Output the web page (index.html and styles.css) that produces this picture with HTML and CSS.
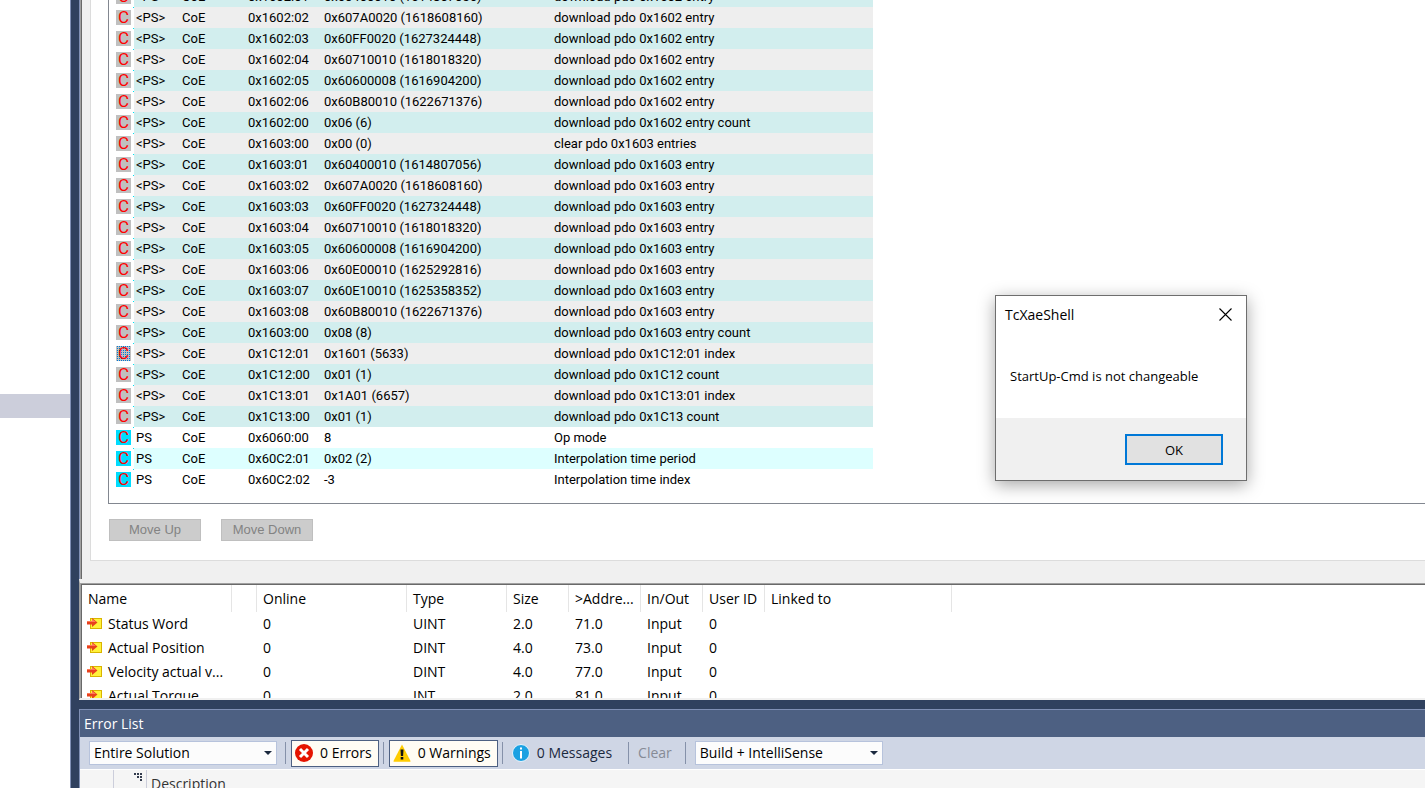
FILE: index.html
```html
<!DOCTYPE html>
<html lang="en">
<head>
<meta charset="utf-8">
<title>TcXaeShell</title>
<link rel="stylesheet" href="styles.css">
</head>
<body>
<svg class="defs" aria-hidden="true">
  <symbol id="input-var" viewBox="0 0 15 12">
    <rect x="3.500" y=".5" width="11" height="10" fill="#fff23a" stroke="#d9b400"/>
    <path d="M0 3h5V0l5.500 4.500L5 9V6.500H0z" fill="#e8401c"/>
    <path d="M0 3h5V1l4 3H0z" fill="#ff7a58"/>
  </symbol>
</svg>
<div class="shell">
  <aside class="tree"><div class="tree-selection"></div></aside>
  <main class="workspace">
    <section class="editor">
      <div class="page">
        <div class="list">
          <table class="startup">
            <colgroup><col class="c-icon"><col class="c-trans"><col class="c-proto"><col class="c-index"><col class="c-data"><col class="c-comment"></colgroup>
            <tbody>
            <tr class="teal"><td><span class="cmd">C</span></td><td>&lt;PS&gt;</td><td>CoE</td><td>0x1602:01</td><td>0x60400010 (1614807056)</td><td>download pdo 0x1602 entry</td></tr>
            <tr class="gray"><td><span class="cmd">C</span></td><td>&lt;PS&gt;</td><td>CoE</td><td>0x1602:02</td><td>0x607A0020 (1618608160)</td><td>download pdo 0x1602 entry</td></tr>
            <tr class="teal"><td><span class="cmd">C</span></td><td>&lt;PS&gt;</td><td>CoE</td><td>0x1602:03</td><td>0x60FF0020 (1627324448)</td><td>download pdo 0x1602 entry</td></tr>
            <tr class="gray"><td><span class="cmd">C</span></td><td>&lt;PS&gt;</td><td>CoE</td><td>0x1602:04</td><td>0x60710010 (1618018320)</td><td>download pdo 0x1602 entry</td></tr>
            <tr class="teal"><td><span class="cmd">C</span></td><td>&lt;PS&gt;</td><td>CoE</td><td>0x1602:05</td><td>0x60600008 (1616904200)</td><td>download pdo 0x1602 entry</td></tr>
            <tr class="gray"><td><span class="cmd">C</span></td><td>&lt;PS&gt;</td><td>CoE</td><td>0x1602:06</td><td>0x60B80010 (1622671376)</td><td>download pdo 0x1602 entry</td></tr>
            <tr class="teal"><td><span class="cmd">C</span></td><td>&lt;PS&gt;</td><td>CoE</td><td>0x1602:00</td><td>0x06 (6)</td><td>download pdo 0x1602 entry count</td></tr>
            <tr class="gray"><td><span class="cmd">C</span></td><td>&lt;PS&gt;</td><td>CoE</td><td>0x1603:00</td><td>0x00 (0)</td><td>clear pdo 0x1603 entries</td></tr>
            <tr class="teal"><td><span class="cmd">C</span></td><td>&lt;PS&gt;</td><td>CoE</td><td>0x1603:01</td><td>0x60400010 (1614807056)</td><td>download pdo 0x1603 entry</td></tr>
            <tr class="gray"><td><span class="cmd">C</span></td><td>&lt;PS&gt;</td><td>CoE</td><td>0x1603:02</td><td>0x607A0020 (1618608160)</td><td>download pdo 0x1603 entry</td></tr>
            <tr class="teal"><td><span class="cmd">C</span></td><td>&lt;PS&gt;</td><td>CoE</td><td>0x1603:03</td><td>0x60FF0020 (1627324448)</td><td>download pdo 0x1603 entry</td></tr>
            <tr class="gray"><td><span class="cmd">C</span></td><td>&lt;PS&gt;</td><td>CoE</td><td>0x1603:04</td><td>0x60710010 (1618018320)</td><td>download pdo 0x1603 entry</td></tr>
            <tr class="teal"><td><span class="cmd">C</span></td><td>&lt;PS&gt;</td><td>CoE</td><td>0x1603:05</td><td>0x60600008 (1616904200)</td><td>download pdo 0x1603 entry</td></tr>
            <tr class="gray"><td><span class="cmd">C</span></td><td>&lt;PS&gt;</td><td>CoE</td><td>0x1603:06</td><td>0x60E00010 (1625292816)</td><td>download pdo 0x1603 entry</td></tr>
            <tr class="teal"><td><span class="cmd">C</span></td><td>&lt;PS&gt;</td><td>CoE</td><td>0x1603:07</td><td>0x60E10010 (1625358352)</td><td>download pdo 0x1603 entry</td></tr>
            <tr class="gray"><td><span class="cmd">C</span></td><td>&lt;PS&gt;</td><td>CoE</td><td>0x1603:08</td><td>0x60B80010 (1622671376)</td><td>download pdo 0x1603 entry</td></tr>
            <tr class="teal"><td><span class="cmd">C</span></td><td>&lt;PS&gt;</td><td>CoE</td><td>0x1603:00</td><td>0x08 (8)</td><td>download pdo 0x1603 entry count</td></tr>
            <tr class="gray"><td><span class="cmd selected">C</span></td><td>&lt;PS&gt;</td><td>CoE</td><td>0x1C12:01</td><td>0x1601 (5633)</td><td>download pdo 0x1C12:01 index</td></tr>
            <tr class="teal"><td><span class="cmd">C</span></td><td>&lt;PS&gt;</td><td>CoE</td><td>0x1C12:00</td><td>0x01 (1)</td><td>download pdo 0x1C12 count</td></tr>
            <tr class="gray"><td><span class="cmd">C</span></td><td>&lt;PS&gt;</td><td>CoE</td><td>0x1C13:01</td><td>0x1A01 (6657)</td><td>download pdo 0x1C13:01 index</td></tr>
            <tr class="teal"><td><span class="cmd">C</span></td><td>&lt;PS&gt;</td><td>CoE</td><td>0x1C13:00</td><td>0x01 (1)</td><td>download pdo 0x1C13 count</td></tr>
            <tr><td><span class="cmd editable">C</span></td><td>PS</td><td>CoE</td><td>0x6060:00</td><td>8</td><td>Op mode</td></tr>
            <tr class="aqua"><td><span class="cmd editable">C</span></td><td>PS</td><td>CoE</td><td>0x60C2:01</td><td>0x02 (2)</td><td>Interpolation time period</td></tr>
            <tr><td><span class="cmd editable">C</span></td><td>PS</td><td>CoE</td><td>0x60C2:02</td><td>-3</td><td>Interpolation time index</td></tr>
            </tbody>
          </table>
        </div>
        <div class="moves">
          <button class="move" type="button" disabled>Move Up</button>
          <button class="move" type="button" disabled>Move Down</button>
        </div>
      </div>
    </section>
    <section class="variables">
      <table class="vars">
        <colgroup><col class="v-name"><col class="v-gap"><col class="v-online"><col class="v-type"><col class="v-size"><col class="v-addr"><col class="v-io"><col class="v-user"><col class="v-link"></colgroup>
        <thead><tr><th>Name</th><th></th><th>Online</th><th>Type</th><th>Size</th><th>&gt;Addre...</th><th>In/Out</th><th>User ID</th><th>Linked to</th></tr></thead>
        <tbody>
        <tr><td><span class="var"><svg class="var-icon"><use href="#input-var"/></svg>Status Word</span></td><td></td><td>0</td><td>UINT</td><td>2.0</td><td>71.0</td><td>Input</td><td>0</td><td></td></tr>
        <tr><td><span class="var"><svg class="var-icon"><use href="#input-var"/></svg>Actual Position</span></td><td></td><td>0</td><td>DINT</td><td>4.0</td><td>73.0</td><td>Input</td><td>0</td><td></td></tr>
        <tr><td><span class="var"><svg class="var-icon"><use href="#input-var"/></svg>Velocity actual v...</span></td><td></td><td>0</td><td>DINT</td><td>4.0</td><td>77.0</td><td>Input</td><td>0</td><td></td></tr>
        <tr><td><span class="var"><svg class="var-icon"><use href="#input-var"/></svg>Actual Torque</span></td><td></td><td>0</td><td>INT</td><td>2.0</td><td>81.0</td><td>Input</td><td>0</td><td></td></tr>
        </tbody>
      </table>
    </section>
    <section class="errors">
      <h2 class="title">Error List</h2>
      <div class="toolbar">
        <span class="combo"><select aria-label="Scope"><option>Entire Solution</option></select></span>
        <span class="sep"></span>
        <button class="filter on" type="button">
          <svg class="status" viewBox="0 0 18 18"><circle cx="9" cy="9" r="9" fill="#e51400"/><path d="M5 5l8 8M13 5l-8 8" stroke="#fff" stroke-width="3"/></svg>0 Errors</button>
        <span class="sep"></span>
        <button class="filter on" type="button">
          <svg class="status" viewBox="0 0 18 18"><path d="M9 0.500L17.500 17a.6.600 0 0 1-.5.800H1a.6.600 0 0 1-.5-.8z" fill="#fc0"/><path d="M7.500 5.500h3l-.4 6.500h-2.200zM7.700 13h2.600v2.600H7.700z" fill="#111"/></svg>0 Warnings</button>
        <span class="sep"></span>
        <button class="filter" type="button">
          <svg class="status" viewBox="0 0 18 18"><circle cx="9" cy="9" r="8.500" fill="#1ba1e2" stroke="#e8f3fb"/><path d="M8 3.500h2v2H8zM8 7h2v7.500H8z" fill="#fff"/></svg>0 Messages</button>
        <span class="sep"></span>
        <button class="clear" type="button" disabled>Clear</button>
        <span class="sep wide"></span>
        <span class="combo"><select aria-label="Source"><option>Build + IntelliSense</option></select></span>
      </div>
      <div class="columns">
        <span class="col-blank"></span>
        <span class="col-icon"><svg width="8" height="8" viewBox="0 0 8 8"><path d="M0 0h2v2H0zM3 0h2v2H3zM6 0h2v2H6zM3 3h2v2H3zM6 3h2v2H6zM6 6h2v2H6z" fill="#333b4d"/></svg></span>
        <span class="col-desc">Description</span>
      </div>
    </section>
  </main>
</div>
<div class="dialog" role="dialog" aria-labelledby="dlg-title">
  <header class="dialog-head">
    <span id="dlg-title">TcXaeShell</span>
    <button class="close" type="button" aria-label="Close"><svg width="13" height="13" viewBox="0 0 13 13"><path d="M.5.500l12 12M12.500.500l-12 12" stroke="#000" stroke-width="1.100"/></svg></button>
  </header>
  <p class="message">StartUp-Cmd is not changeable</p>
  <footer class="dialog-foot"><button class="ok" type="button">OK</button></footer>
</div>
</body>
</html>
```
FILE: styles.css
```css
* { box-sizing: border-box; }
body {
  margin: 0;
  height: 100vh;
  overflow: hidden;
  font: 14px/20px "Open Sans", "Noto Sans", sans-serif;
  color: #000;
  background: #fff;
}
button, select { font: inherit; color: inherit; margin: 0; }
.defs { display: none; }
.shell { display: flex; height: 100%; }
.tree { flex: 0 0 70px; padding-top: 394px; }
.tree-selection { height: 24px; background: #cccedb; }
.workspace {
  flex: 1;
  min-width: 0;
  display: flex;
  flex-direction: column;
  padding-left: 8px;
  background: #30415f;
  border-left: 1px solid #8090b5;
}

.editor {
  flex: 1;
  min-height: 0;
  display: flex;
  flex-direction: column;
  justify-content: flex-end;
  overflow: hidden;
  padding: 0 0 18px 10px;
  background: #f0f0f0;
  border-left: 1px solid #8090b5;
  box-shadow: inset 1px 0 #a0a0a0, inset 2px 0 #696969;
}
.page {
  padding: 0 0 19px 17px;
  background: #fff;
  border: solid #dcdcdc;
  border-width: 0 0 1px 1px;
}
.list { padding-bottom: 13px; border: solid #828790; border-width: 0 0 1px 1px; }
.startup {
  table-layout: fixed;
  width: 764px;
  border-collapse: collapse;
  font: 13px/21px Roboto, "Liberation Sans", sans-serif;
}
.startup td { height: 21px; padding: 0 0 0 2px; white-space: nowrap; }
.startup td:first-child {
  padding-left: 7px;
  background: linear-gradient(#00e0f0, #00e0f0) 24px 0 / 1px 1px no-repeat #fff;
}
.c-icon { width: 25px; }
.c-trans { width: 46px; }
.c-proto { width: 66px; }
.c-index { width: 76px; }
.c-data { width: 230px; }
.teal { background: #d2eeee; }
.gray { background: #eee; }
.aqua { background: #dff; }
.cmd {
  display: block;
  width: 15px;
  height: 15px;
  padding-left: 2px;
  background: #c0c0c0;
  color: #f00;
  font: 17px/15px Roboto, "Liberation Sans", sans-serif;
}
.cmd.editable { background: #00dcff; }
.cmd.selected { background: conic-gradient(#0078d7 25%, #c0c0c0 0) 0 0 / 2px 2px; }
.moves { display: flex; gap: 20px; margin: 15px 0 0 1px; }
.move {
  width: 92px;
  height: 22px;
  padding: 0;
  border: 1px solid #bfbfbf;
  background: #ccc;
  color: #838383;
  font: 13px/20px "Liberation Sans", Arial, sans-serif;
}

.variables {
  flex: 0 0 121px;
  overflow: hidden;
  background: #fff;
  border-left: 1px solid #a0a0a0;
  border-top: 4px solid #f0f0f0;
  border-bottom: 2px solid #f0f0f0;
  box-shadow: inset 1px 1px #a0a0a0, inset 2px 2px #696969;
}
.vars {
  table-layout: fixed;
  width: 870px;
  margin: 2px 0 0 2px;
  border-collapse: separate;
  border-spacing: 0;
}
.vars th, .vars td { padding: 0 0 0 6px; text-align: left; font-weight: 400; white-space: nowrap; }
.vars th { height: 27px; border-right: 1px solid #e5e5e5; }
.vars td { height: 24px; }
.vars td:first-child { padding-left: 5px; }
.v-name { width: 150px; }
.v-gap { width: 25px; }
.v-online { width: 150px; }
.v-type { width: 100px; }
.v-size, .v-io, .v-user { width: 62px; }
.v-addr { width: 72px; }
.var { display: flex; align-items: center; gap: 6px; }
.var-icon { width: 15px; height: 12px; }

.errors { border-left: 1px solid #8090b5; border-top: 1px solid #8090b5; margin-top: 9px; background: #cfd6e5; }
.title { margin: 0; padding: 0 4px; background: #4d6082; color: #fff; font-size: 14px; font-weight: 400; line-height: 27px; }
.toolbar { display: flex; align-items: center; height: 32px; padding: 0 9px; }
.combo { position: relative; width: 188px; height: 24px; }
.combo::after {
  content: "";
  position: absolute;
  right: 5px;
  top: 10px;
  border: solid transparent;
  border-width: 4px 4px 0;
  border-top-color: #1b293e;
  pointer-events: none;
}
.combo select {
  appearance: none;
  width: 100%;
  height: 100%;
  padding: 0 4px;
  border: 1px solid #b7c3dc;
  border-radius: 0;
  background: #fcfcfc;
}
.sep { width: 1px; height: 22px; margin: 0 5px 0 8px; background: #8591a9; }
.sep.wide { margin: 0 9px; }
.filter {
  display: flex;
  align-items: center;
  gap: 7px;
  height: 27px;
  padding: 0 7px 0 3px;
  border: 1px solid transparent;
  background: none;
  color: #1b293e;
  white-space: nowrap;
}
.filter.on { padding-right: 6px; background: #fffcf4; border-color: #4d6082; color: #000; }
.filter.on + .sep { margin-left: 4px; }
.status { width: 18px; height: 18px; }
.clear { padding: 0 4px; border: 0; background: none; color: #868b96; }
.columns { display: flex; height: 19px; overflow: hidden; background: #f5f5f5; border-top: 1px solid #fff; color: #333; }
.columns span { flex: none; height: 28px; }
.col-blank { width: 34px; border-right: 1px solid #cccedb; }
.col-icon { width: 33px; padding: 2px 4px; border-right: 1px solid #cccedb; text-align: right; line-height: 8px; }
.col-desc { padding-left: 4px; line-height: 28px; }

.dialog {
  position: absolute;
  left: 995px;
  top: 295px;
  width: 252px;
  background: #fff;
  border: 1px solid #6e6e6e;
  box-shadow: 0 4px 16px rgba(0, 0, 0, .35);
  font-size: 13px;
}
.dialog-head { display: flex; justify-content: space-between; align-items: center; height: 37px; padding: 0 14px 0 9px; font-size: 14px; }
.close { display: flex; padding: 0; border: 0; background: none; }
.message { margin: 0; padding: 33px 14px 32px; }
.dialog-foot { display: flex; justify-content: flex-end; padding: 16px 23px 15px; background: #f0f0f0; }
.ok { width: 98px; height: 31px; padding: 0; border: 2px solid #0078d7; background: #e1e1e1; }
```
